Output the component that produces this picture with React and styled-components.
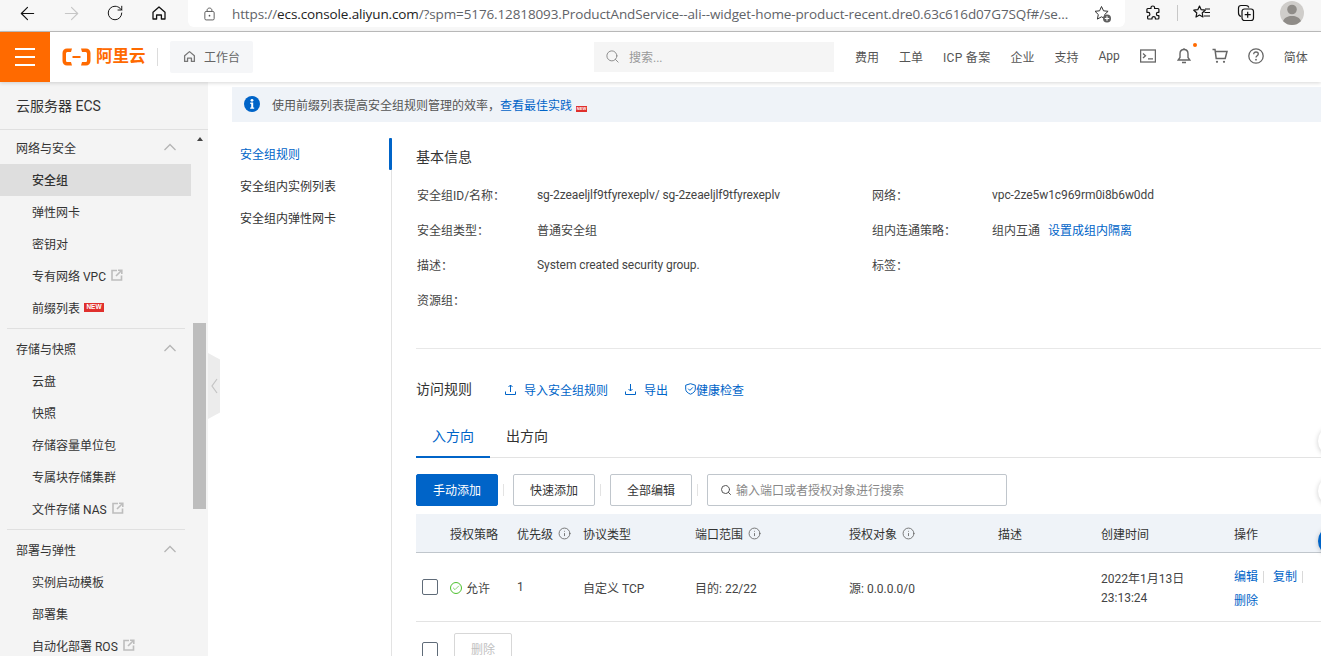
import React from "react";
import styled, { createGlobalStyle } from "styled-components";
import { ArrowLeft, ArrowRight, RotateCw, Search, Info, Check } from "lucide-react";

const Global = createGlobalStyle`
  html, body { margin: 0; padding: 0; overflow: hidden; background: #fff; }
  body { font-family: Roboto, "Noto Sans CJK SC", "Liberation Sans", sans-serif; font-size: 12px; color: #333; }
  * { box-sizing: border-box; }
`;

const Page = styled.div`
  position: relative; width: 1321px; height: 656px; overflow: hidden;
  display: flex; flex-direction: column;
`;

/* browser chrome */
const Chrome = styled.div`
  height: 32px; flex: none; display: flex; align-items: flex-start;
  background: #f7f7f7; border-bottom: 1px solid #bfbfbf;
`;
const ChromeBtn = styled.div`
  width: 44px; height: 26px; flex: none; display: flex; align-items: center; justify-content: center;
  color: ${p => (p.$off ? "#c6c6c6" : "#111")};
`;
const ChromeNav = styled.div`display: flex; padding-left: 5px; width: 188px; flex: none;`;
const UrlBar = styled.div`
  width: 937px; height: 27px; flex: none; background: #fff; border-radius: 0 0 6px 6px;
  display: flex; align-items: center; padding: 0 12px 0 16px; color: #555;
`;
const Url = styled.div`
  margin-left: 17px; width: 844px; flex: none; white-space: nowrap; overflow: hidden;
  font-family: "Open Sans", sans-serif; font-size: 13.5px; line-height: 24px; letter-spacing: -0.12px; color: #5f6368;
  b { font-weight: 400; color: #222; }
`;
const StarSlot = styled.div`width: 20px; height: 20px; flex: none; display: flex; align-items: center; justify-content: center; margin-left: 17px;`;
const ChromeTools = styled.div`
  flex: 1; display: flex; align-items: center; height: 26px; padding-left: 18px;
`;
const ChromeSep = styled.div`width: 1px; height: 16px; background: #c8c8c8; margin: 0 14px 0 14px;`;
const ToolIcon = styled.div`width: 20px; height: 20px; display: flex; align-items: center; justify-content: center; margin-right: ${p => p.$mr || 0}px;`;
const Avatar = styled.div`
  width: 24px; height: 24px; border-radius: 50%; background: #cfcdca; overflow: hidden; margin-left: 1px;
`;

/* console nav */
const TopNav = styled.header`
  height: 50px; flex: none; display: flex; align-items: center; background: #fff;
  box-shadow: 0 1px 4px rgba(0,0,0,.16); position: relative; z-index: 3;
`;
const MenuBtn = styled.div`
  width: 50px; height: 50px; flex: none; background: #ff6a00; display: flex; flex-direction: column;
  align-items: center; justify-content: center; gap: 6px;
  i { display: block; width: 20px; height: 2px; background: #fff; }
`;
const Logo = styled.div`
  display: flex; align-items: center; margin-left: 12px; color: #ff6a00; gap: 5px; width: 84px; flex: none; white-space: nowrap;
  font-size: 16.5px; font-weight: 700; line-height: 20px;
`;
const LogoSep = styled.div`width: 1px; height: 18px; background: #dcdcdc; margin: 0 12px 0 11px;`;
const HomePill = styled.div`
  width: 83px; height: 32px; background: #f5f6f8; border-radius: 2px; display: flex; align-items: center;
  padding: 0 0 1px 13px; gap: 8px; color: #666; flex: none;
`;
const NavSearch = styled.div`
  width: 240px; height: 30px; margin-left: 341px; background: #f5f5f5; display: flex; align-items: center;
  padding: 0 0 1px 11px; gap: 9px; color: #999; flex: none;
`;
const NavLinks = styled.nav`
  flex: 1; display: flex; align-items: center; padding: 0 0 2px 21px; gap: 20px; color: #555; white-space: nowrap;
`;
const WideLabel = styled.span`letter-spacing: 0.3px;`;
const NavIcon = styled.div`
  position: relative; width: 16px; height: 16px; color: #666; display: flex; align-items: center; justify-content: center;
`;
const Dot = styled.span`
  position: absolute; top: -5px; right: -5px; width: 4px; height: 4px; background: #ff6a00; border-radius: 50%;
`;

/* body */
const Body = styled.div`flex: 1; display: flex; min-height: 0;`;
const Sidebar = styled.aside`
  width: 208px; flex: none; background: #f4f4f4; display: flex; flex-direction: column; overflow: hidden;
`;
const SideTitle = styled.div`
  height: 48px; flex: none; padding: 0 0 2px 16px; border-bottom: 1px solid #e0e0e0; display: flex; align-items: center;
  font-size: 14px; color: #333;
`;
const SideBody = styled.div`flex: 1; display: flex; min-height: 0;`;
const SideList = styled.div`width: 191px; flex: none; padding-top: 2px;`;
const Group = styled.section`
  & + & { margin-top: 4px; }
  &:not(:last-child)::after { content: ""; display: block; height: 1px; background: #e0e0e0; margin: 4px 6px 0 7px; }
`;
const GroupHead = styled.div`
  height: 32px; padding: 0 15px 2px 16px; display: flex; align-items: center; justify-content: space-between; color: #333;
`;
const Item = styled.div`
  height: 32px; padding: 0 0 2px 32px; display: flex; align-items: center; gap: 5px; white-space: nowrap;
  color: #333; background: ${p => (p.$active ? "#dedede" : "transparent")}; font-weight: ${p => (p.$active ? 500 : 400)};
`;
const NewBadge = styled.span`
  display: inline-flex; align-items: center; justify-content: center; width: ${p => (p.$small ? 11 : 20)}px; height: ${p => (p.$small ? 6 : 9)}px;
  background: #e0302d; color: #fff; font-family: "Liberation Sans", sans-serif; font-weight: 700; font-size: ${p => (p.$small ? 4 : 6.5)}px; line-height: 1;
  margin-left: ${p => (p.$small ? 4 : -1)}px;
`;
const Scrollbar = styled.div`
  width: 13px; margin-left: 2px; flex: none; padding-top: 7px; display: flex; flex-direction: column; align-items: center;
`;
const ScrollArrow = styled.div`
  width: 0; height: 0; border-left: 3.5px solid transparent; border-right: 3.5px solid transparent; border-bottom: 4px solid #444;
`;
const ScrollThumb = styled.div`width: 13px; height: 186px; margin-top: 182px; background: #bdbdbd;`;
const CollapseTab = styled.div`
  position: absolute; left: 208px; top: 353px; width: 12px; height: 66px; background: #ececec; z-index: 2;
  clip-path: polygon(0 0, 100% 10%, 100% 90%, 0 100%);
  display: flex; align-items: center; justify-content: center; color: #c4c4c4;
`;

const Main = styled.main`flex: 1; min-width: 0; display: flex; flex-direction: column; padding: 5px 0 0 24px;`;
const Notice = styled.div`
  height: 35px; flex: none; background: #eff3f8; display: flex; align-items: center; padding: 0 0 1px 12px; gap: 12px; color: #555;
`;
const Link = styled.a`color: #0064c8; text-decoration: none; white-space: nowrap;`;
const InlineLink = styled(Link)`margin-left: 8px;`;
const Split = styled.div`flex: 1; display: flex; min-height: 0; padding-top: 16px;`;
const SubNav = styled.div`width: 160px; flex: none; border-right: 1px solid #e3e3e3;`;
const SubItem = styled.div`
  position: relative; height: 32px; line-height: 34px; padding-left: 8px;
  color: ${p => (p.$active ? "#0064c8" : "#333")};
  ${p => p.$active && `&::after { content: ""; position: absolute; right: -1px; top: 0; width: 3px; height: 32px; background: #0064c8; border-radius: 1px; }`}
`;
const Content = styled.div`flex: 1; min-width: 0; padding: 8px 0 0 24px; overflow: hidden;`;
const Title = styled.div`font-size: 14px; line-height: 22px; color: #333;`;
const RulesTitle = styled(Title)`margin-bottom: 1px;`;
const InfoGrid = styled.div`
  display: grid; grid-template-columns: 120px 335px 120px 1fr; grid-auto-rows: 35px; align-items: center;
  margin-top: 9px; padding: 0 0 31px 1px; border-bottom: 1px solid #e8e8e8; color: #444; white-space: nowrap;
`;
const Mono = styled.span`letter-spacing: -0.08px;`;
const RulesHead = styled.div`display: flex; align-items: center; height: 22px; margin-top: 29px;`;
const RuleAction = styled(Link)`
  display: inline-flex; align-items: center; margin-left: ${p => p.$ml}px; gap: ${p => p.$gap}px;
`;
const Tabs = styled.div`display: flex; height: 42px; margin-top: 16px; border-bottom: 1px solid #e3e3e3;`;
const Tab = styled.div`
  width: 74px; height: 42px; flex: none; display: flex; align-items: center; justify-content: center; font-size: 14px; padding-bottom: 3px;
  color: ${p => (p.$active ? "#0064c8" : "#333")}; border-bottom: 2px solid ${p => (p.$active ? "#0064c8" : "transparent")};
`;
const Toolbar = styled.div`display: flex; align-items: center; height: 32px; margin-top: 16px;`;
const Button = styled.div`
  width: ${p => p.$w || 82}px; height: 32px; flex: none; display: flex; align-items: center; justify-content: center; border-radius: 2px; padding-bottom: 1px;
  border: 1px solid ${p => (p.$primary ? "#0064c8" : p.$off ? "#d7d7d7" : "#c0c6cc")};
  background: ${p => (p.$primary ? "#0064c8" : "#fff")}; color: ${p => (p.$primary ? "#fff" : p.$off ? "#c1c1c1" : "#333")};
`;
const ToolSep = styled.div`width: 1px; height: 12px; background: #e3e3e3; margin: 0 9px 0 5px;`;
const SearchBox = styled.div`
  width: 300px; height: 32px; flex: none; border: 1px solid #c0c6cc; border-radius: 2px; display: flex; align-items: center;
  padding: 0 0 1px 12px; gap: 4px; color: #888;
`;
const columns = "34px 67px 66px 112px 154px 149px 103px 133px 1fr";
const TableHead = styled.div`
  display: grid; grid-template-columns: ${columns}; align-items: center; height: 39px; margin-top: 8px;
  background: #eff3f8; border-bottom: 1px solid #c0c6cc; color: #333; white-space: nowrap;
`;
const HeadCell = styled.div`display: flex; align-items: center; gap: 5px; grid-column: ${p => p.$col};`;
const TableRow = styled.div`
  display: grid; grid-template-columns: ${columns}; align-items: center; height: 69px;
  border-bottom: 1px solid #e3e3e3; color: #444; white-space: nowrap;
`;
const Check16 = styled.div`width: 16px; height: 16px; border: 1px solid #5f6b78; border-radius: 2px; margin-left: 6px; background: #fff;`;
const Allow = styled.div`display: flex; align-items: center; gap: 4px;`;
const AllowIcon = styled.div`
  width: 12px; height: 12px; margin-top: 1px; border-radius: 50%; border: 1px solid #4ec12f; color: #4ec12f; display: flex; align-items: center; justify-content: center;
`;
const DateCell = styled.div`line-height: 19px; margin-top: 3px;`;
const Ops = styled.div`line-height: 24px; margin-top: 3px; width: 80px; white-space: normal;`;
const OpSep = styled.span`display: inline-block; width: 1px; height: 12px; background: #d9d9d9; margin: 0 9px 0 5px; vertical-align: -2px;`;
const OpSepEnd = styled(OpSep)`margin: 0 0 0 5px;`;
const Footer = styled.div`display: flex; align-items: flex-start; margin-top: 11px;`;
const FooterCheck = styled(Check16)`margin-top: 9px; margin-right: 16px;`;
const FloatBtn = styled.div`
  position: absolute; left: 1318px; top: ${p => p.$top}px; width: 30px; height: 30px; border-radius: 50%;
  background: ${p => (p.$blue ? "#0064c8" : "#fff")}; box-shadow: 0 1px 5px rgba(0,0,0,.2); z-index: 4;
`;

const Puzzle = () => (
  <svg width="16" height="16" viewBox="0 0 16 16" fill="none" stroke="#111" strokeWidth="1.2" strokeLinejoin="round">
    <path d="M6 2.5c0-2 3.6-2 3.6 0v1h3.4c.5 0 .9.4.9.9v2.9h-1c-2 0-2 3.4 0 3.4h1v2.4c0 .5-.4.9-.9.9h-2.6v-.8c0-2-3.4-2-3.4 0v.8H3.5c-.5 0-.9-.4-.9-.9V11h.6c2.2 0 2.2-3.7 0-3.7H1.9V4.4c0-.5.4-.9.9-.9H6z" />
  </svg>
);
const StarPlus = () => (
  <svg width="18" height="18" viewBox="0 0 18 18" fill="none">
    <path d="M7.5 1.5l2 4.3 4.6.5-3.4 3.2.9 4.6-4.1-2.3-4.1 2.3.9-4.6L1 6.3l4.6-.5z" stroke="#333" strokeWidth="1" strokeLinejoin="round" />
    <circle cx="13" cy="13.5" r="4" fill="#5f5f5f" />
    <path d="M13 11.3v4.4M10.8 13.5h4.4" stroke="#fff" strokeWidth="1.1" />
  </svg>
);
const FavList = () => (
  <svg width="18" height="18" viewBox="0 0 18 18" fill="none" stroke="#111" strokeWidth="1.2" strokeLinejoin="round">
    <path d="M6.5 2l1.7 3.7 4 .5-3 2.8.8 4-3.5-2-3.5 2 .8-4-3-2.8 4-.5z" />
    <path d="M12 5h5M11.5 8.5H17M11 12h6" />
  </svg>
);
const Collections = () => (
  <svg width="18" height="18" viewBox="0 0 18 18" fill="none" stroke="#111" strokeWidth="1.2">
    <path d="M4 12.5C2.5 12 1.5 10.8 1.5 9V4c0-1.5 1-2.5 2.5-2.5h5c1.5 0 2.5 .8 2.9 2" />
    <rect x="5" y="5" width="11.5" height="11.5" rx="2.5" />
    <path d="M10.7 7.7v6M7.7 10.7h6" />
  </svg>
);
const HomeIcon = ({ size = 16, color = "#111", sw = 1.3 }) => (
  <svg width={size} height={size} viewBox="0 0 16 16" fill="none" stroke={color} strokeWidth={sw} strokeLinejoin="round">
    <path d="M2 7.2L8 2l6 5.2V14h-3.6v-4H5.6v4H2z" />
  </svg>
);
const LockIcon = () => (
  <svg width="13" height="16" viewBox="0 0 13 16" fill="none" stroke="#555" strokeWidth="1.1">
    <rect x="1" y="5" width="11" height="10" rx="1.5" />
    <path d="M3.7 5V3.4C3.7 1.9 5 1 6.5 1s2.8 .9 2.8 2.4V5" />
    <circle cx="6.5" cy="10" r="1" fill="#555" stroke="none" />
  </svg>
);
const LogoMark = () => (
  <svg width="29" height="18" viewBox="0 0 29 18" fill="none">
    <path d="M10 .5H5C2.4.5.5 2.400.5 5v8c0 2.600 1.900 4.500 4.500 4.500h5l-1-3.500H5.600C4.700 14 4 13.300 4 12.400V5.600C4 4.700 4.700 4 5.600 4H9zM19 .5h5c2.600 0 4.500 1.900 4.500 4.500v8c0 2.600-1.900 4.500-4.500 4.500h-5l1-3.500h3.400c.9 0 1.600-.7 1.600-1.600V5.600C25 4.700 24.300 4 23.400 4H20z" fill="#ff6a00" />
    <rect x="10.500" y="8" width="8" height="2" fill="#ff6a00" />
  </svg>
);
const NoticeIcon = () => (
  <svg width="16" height="16" viewBox="0 0 16 16">
    <circle cx="8" cy="8" r="8" fill="#0064c8" />
    <circle cx="8" cy="4.300" r="1.400" fill="#fff" />
    <path d="M6.300 6.600H9.200V11.400H10.200V12.800H6.200V11.400H7.200V8H6.300z" fill="#fff" />
  </svg>
);
const External = () => (
  <svg width="12" height="12" viewBox="0 0 12 12" fill="none" stroke="#bdbdbd" strokeWidth="1.6">
    <path d="M6 1.500H1v9.500h9.500V6.500" />
    <path d="M5 7l5-5M7 1.200h3.800V5" />
  </svg>
);
const Chevron = () => (
  <svg width="12" height="8" viewBox="0 0 12 8" fill="none" stroke="#b5b5b5" strokeWidth="1.300"><path d="M.5 7L6 1.500 11.500 7" /></svg>
);
const ConsoleIcon = () => (
  <svg width="16" height="14" viewBox="0 0 16 14" fill="none" stroke="#666" strokeWidth="1.300">
    <rect x=".6" y="1" width="14.800" height="12" />
    <path d="M3 4.500l2.500 2.200L3 9M8 9.800h5" />
  </svg>
);
const Bell = () => (
  <svg width="14" height="16" viewBox="0 0 14 16" fill="none" stroke="#666" strokeWidth="1.400">
    <path d="M7 1.500c-2.500 0-4 1.800-4 4.200v3.800L1.200 12h11.600L11 9.500V5.700c0-2.400-1.500-4.200-4-4.200zM5 14.500h4" />
    <path d="M7 .2v1.300" />
  </svg>
);
const Cart = () => (
  <svg width="16" height="16" viewBox="0 0 16 16" fill="none" stroke="#666" strokeWidth="1.500">
    <path d="M.5 1.500H3l1.200 9h9L15 3.500H3.400" />
    <circle cx="5" cy="13.800" r="1.100" fill="#666" stroke="none" />
    <circle cx="12" cy="13.800" r="1.100" fill="#666" stroke="none" />
  </svg>
);
const Help = () => (
  <svg width="16" height="16" viewBox="0 0 16 16" fill="none" stroke="#666" strokeWidth="1.300">
    <circle cx="8" cy="8" r="7.200" />
    <path d="M5.700 6.200c0-1.400 1-2.200 2.300-2.200s2.300 .8 2.300 2c0 1.700-2.300 1.700-2.300 3.500" />
    <circle cx="8" cy="11.700" r=".9" fill="#666" stroke="none" />
  </svg>
);
const UploadIcon = ({ down }) => (
  <svg width="11" height="11" viewBox="0 0 11 11" fill="none" stroke="#0064c8" strokeWidth="1">
    <path d="M.5 7.500v3h10v-3" />
    <path d={down ? "M5.500 0v7M3.500 5l2 2 2-2" : "M5.500 8V1M3.500 3l2-2 2 2"} />
  </svg>
);
const Shield = () => (
  <svg width="11" height="12" viewBox="0 0 11 12" fill="none" stroke="#0064c8" strokeWidth="1">
    <path d="M5.500 .7l4.800 1.500v4c0 2.300-2.200 4-4.800 5-2.600-1-4.800-2.700-4.800-5v-4z" />
    <path d="M3.200 5.700l1.700 1.700 3-3" />
  </svg>
);
const InfoSmall = () => <Info size={13} color="#666" strokeWidth={1.6} />;

const groups = [
  ["网络与安全", [["安全组", "active"], ["弹性网卡"], ["密钥对"], ["专有网络 VPC", "ext"], ["前缀列表", "new"]]],
  ["存储与快照", [["云盘"], ["快照"], ["存储容量单位包"], ["专属块存储集群"], ["文件存储 NAS", "ext"]]],
  ["部署与弹性", [["实例启动模板"], ["部署集"], ["自动化部署 ROS", "ext"]]],
];

export default function App() {
  return (
    <Page>
      <Global />
      <Chrome>
        <ChromeNav>
          <ChromeBtn><ArrowLeft size={21} strokeWidth={1.3} /></ChromeBtn>
          <ChromeBtn $off><ArrowRight size={21} strokeWidth={1.3} /></ChromeBtn>
          <ChromeBtn><RotateCw size={18} strokeWidth={1.3} /></ChromeBtn>
          <ChromeBtn><HomeIcon /></ChromeBtn>
        </ChromeNav>
        <UrlBar>
          <LockIcon />
          <Url>https://<b>ecs.console.aliyun.com</b>/?spm=5176.12818093.ProductAndService--ali--widget-home-product-recent.dre0.63c616d07G7SQf#/se...</Url>
          <StarSlot><StarPlus /></StarSlot>
        </UrlBar>
        <ChromeTools>
          <ToolIcon><Puzzle /></ToolIcon>
          <ChromeSep />
          <ToolIcon $mr={24}><FavList /></ToolIcon>
          <ToolIcon $mr={23}><Collections /></ToolIcon>
          <Avatar>
            <svg width="24" height="24" viewBox="0 0 24 24" fill="#8f8c88">
              <circle cx="12" cy="8.500" r="4.800" /><path d="M2.500 24c0-6.500 4-9 9.500-9s9.500 2.500 9.500 9z" />
            </svg>
          </Avatar>
        </ChromeTools>
      </Chrome>

      <TopNav>
        <MenuBtn><i /><i /><i /></MenuBtn>
        <Logo><LogoMark /><span>阿里云</span></Logo>
        <LogoSep />
        <HomePill><HomeIcon size={13} color="#777" sw={1.6} /><span>工作台</span></HomePill>
        <NavSearch><Search size={15} color="#888" strokeWidth={1.5} /><span>搜索...</span></NavSearch>
        <NavLinks>
          <span>费用</span><span>工单</span><WideLabel>ICP 备案</WideLabel><span>企业</span><span>支持</span><span>App</span>
          <NavIcon><ConsoleIcon /></NavIcon>
          <NavIcon><Bell /><Dot /></NavIcon>
          <NavIcon><Cart /></NavIcon>
          <NavIcon><Help /></NavIcon>
          <span>简体</span>
        </NavLinks>
      </TopNav>

      <Body>
        <Sidebar>
          <SideTitle>云服务器 ECS</SideTitle>
          <SideBody>
            <SideList>
              {groups.map(([name, items]) => (
                <Group key={name}>
                  <GroupHead><span>{name}</span><Chevron /></GroupHead>
                  {items.map(([label, kind]) => (
                    <Item key={label} $active={kind === "active"}>
                      <span>{label}</span>
                      {kind === "ext" && <External />}
                      {kind === "new" && <NewBadge>NEW</NewBadge>}
                    </Item>
                  ))}
                </Group>
              ))}
            </SideList>
            <Scrollbar><ScrollArrow /><ScrollThumb /></Scrollbar>
          </SideBody>
        </Sidebar>
        <Main>
          <Notice>
            <NoticeIcon />
            <span>使用前缀列表提高安全组规则管理的效率，<Link>查看最佳实践</Link><NewBadge $small>NEW</NewBadge></span>
          </Notice>
          <Split>
            <SubNav>
              <SubItem $active>安全组规则</SubItem>
              <SubItem>安全组内实例列表</SubItem>
              <SubItem>安全组内弹性网卡</SubItem>
            </SubNav>
            <Content>
              <Title>基本信息</Title>
              <InfoGrid>
                <span>安全组ID/名称：</span><Mono>sg-2zeaeljlf9tfyrexeplv/ sg-2zeaeljlf9tfyrexeplv</Mono>
                <span>网络：</span><Mono>vpc-2ze5w1c969rm0i8b6w0dd</Mono>
                <span>安全组类型：</span><span>普通安全组</span>
                <span>组内连通策略：</span><span>组内互通<InlineLink>设置成组内隔离</InlineLink></span>
                <span>描述：</span><Mono>System created security group.</Mono>
                <span>标签：</span><span />
                <span>资源组：</span>
              </InfoGrid>
              <RulesHead>
                <RulesTitle>访问规则</RulesTitle>
                <RuleAction $ml={33} $gap={8}><UploadIcon />导入安全组规则</RuleAction>
                <RuleAction $ml={17} $gap={8}><UploadIcon down />导出</RuleAction>
                <RuleAction $ml={17} $gap={0}><Shield />健康检查</RuleAction>
              </RulesHead>
              <Tabs>
                <Tab $active>入方向</Tab>
                <Tab>出方向</Tab>
              </Tabs>
              <Toolbar>
                <Button $primary>手动添加</Button><ToolSep />
                <Button>快速添加</Button><ToolSep />
                <Button>全部编辑</Button><ToolSep />
                <SearchBox><Search size={12} color="#555" strokeWidth={2} /><span>输入端口或者授权对象进行搜索</span></SearchBox>
              </Toolbar>
              <TableHead>
                <HeadCell $col="2">授权策略</HeadCell>
                <HeadCell>优先级<InfoSmall /></HeadCell>
                <HeadCell>协议类型</HeadCell>
                <HeadCell>端口范围<InfoSmall /></HeadCell>
                <HeadCell>授权对象<InfoSmall /></HeadCell>
                <HeadCell>描述</HeadCell>
                <HeadCell>创建时间</HeadCell>
                <HeadCell>操作</HeadCell>
              </TableHead>
              <TableRow>
                <Check16 />
                <Allow><AllowIcon><Check size={8} strokeWidth={2} /></AllowIcon><span>允许</span></Allow>
                <span>1</span>
                <span>自定义 TCP</span>
                <span>目的: 22/22</span>
                <span>源: 0.0.0.0/0</span>
                <span />
                <DateCell>2022年1月13日<br />23:13:24</DateCell>
                <Ops><Link>编辑</Link><OpSep /><Link>复制</Link><OpSepEnd /><br /><Link>删除</Link></Ops>
              </TableRow>
              <Footer>
                <FooterCheck />
                <Button $w={58} $off>删除</Button>
              </Footer>
            </Content>
          </Split>
        </Main>
      </Body>

      <CollapseTab>
        <svg width="7" height="16" viewBox="0 0 7 16" fill="none" stroke="currentColor" strokeWidth="1.200"><path d="M6 1L1 8l5 7" /></svg>
      </CollapseTab>
      <FloatBtn $top={426} />
      <FloatBtn $top={476} />
      <FloatBtn $top={526} $blue />
    </Page>
  );
}
